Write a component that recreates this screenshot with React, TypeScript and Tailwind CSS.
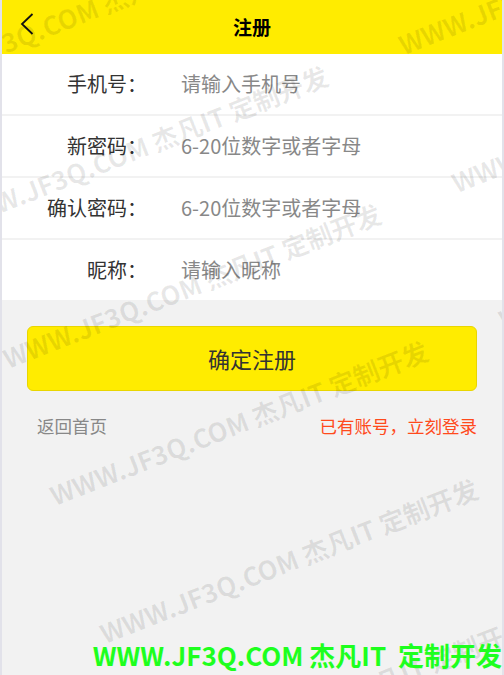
import React from 'react'

const fields = [
  { label: '手机号：', placeholder: '请输入手机号' },
  { label: '新密码：', placeholder: '6-20位数字或者字母' },
  { label: '确认密码：', placeholder: '6-20位数字或者字母' },
  { label: '昵称：', placeholder: '请输入昵称' },
]

const MARK = 'WWW.JF3Q.COM 杰凡IT 定制开发'

// 斜向水印，每条两段，间距固定
function MarkLine({ className }: { className: string }) {
  return (
    <div
      className={`absolute origin-left rotate-[-21.4deg] whitespace-nowrap flex gap-[68px] text-[26px] leading-[26px] font-bold text-black/[0.09] ${className}`}
    >
      <span className="w-[414px] text-right">{MARK}</span>
      <span className="w-[414px] text-right">{MARK}</span>
    </div>
  )
}

export default function App() {
  return (
    <div
      className="relative h-[675px] w-[504px] overflow-hidden bg-[#f2f2f2] border-x-2 border-[#e2e2ea]"
      style={{ fontFamily: '"Microsoft YaHei", "Noto Sans CJK SC", sans-serif' }}
    >
      {/* 顶部栏 */}
      <div className="relative h-[54px] bg-[#ffec00] flex items-center justify-center">
        <button className="absolute left-[16px] top-[11px] p-0.5">
          <svg width="14" height="22" viewBox="0 0 14 22" fill="none">
            <polyline points="12.5,1 2,11 12.5,21" stroke="#111" strokeWidth="1.8" />
          </svg>
        </button>
        <h1 className="text-[19px] font-bold text-black">注册</h1>
      </div>

      {/* 表单 */}
      <div className="flex flex-col gap-[2px]">
        {fields.map((f) => (
          <div key={f.label} className="h-[60px] bg-white flex items-center">
            <label className="w-[145px] text-right text-[20px] text-[#333]">{f.label}</label>
            <input
              type="text"
              placeholder={f.placeholder}
              className="ml-[34px] flex-1 bg-transparent outline-none text-[20px] text-[#333] placeholder:text-[#888]"
            />
          </div>
        ))}
      </div>

      <div className="px-[25px] pt-[26px]">
        <button className="w-full h-[65px] rounded-md bg-[#ffec00] border border-[#e9d600] text-[22px] text-[#333]">
          确定注册
        </button>
        <div className="mt-[22px] flex items-center justify-between pl-[10px] text-[17.5px]">
          <span className="text-[#888]">返回首页</span>
          <span className="text-[#ff4a1c]">已有账号，立刻登录</span>
        </div>
      </div>

      {/* 水印 */}
      <div className="pointer-events-none absolute inset-0">
        <MarkLine className="left-[-111px] top-[74px]" />
        <MarkLine className="left-[-61px] top-[212px]" />
        <MarkLine className="left-[-8px] top-[350px]" />
        <MarkLine className="left-[39px] top-[487px]" />
        <MarkLine className="left-[89px] top-[625px]" />
        <MarkLine className="left-[139px] top-[763px]" />
      </div>

      <div className="pointer-events-none absolute right-0 bottom-[4px] whitespace-nowrap text-[26px] font-bold leading-[32px] text-[#1eff1e]">
        WWW.JF3Q.COM 杰凡IT&nbsp;&nbsp;定制开发
      </div>
    </div>
  )
}
